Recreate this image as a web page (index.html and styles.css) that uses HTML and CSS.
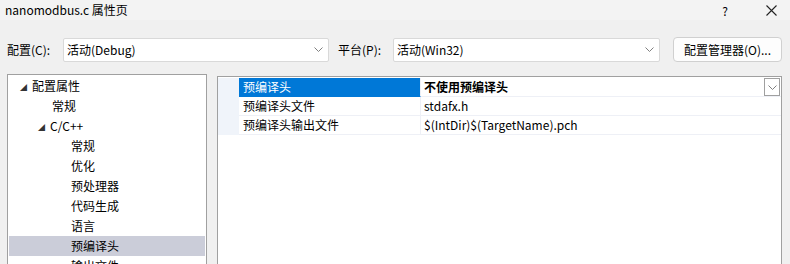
FILE: index.html
```html
<!DOCTYPE html>
<html>
<head>
<meta charset="utf-8">
<link rel="stylesheet" href="styles.css">
</head>
<body>

<!-- barra de titulo -->
<div class="titlebar">
  <span class="title">nanomodbus.c 属性页</span>
  <span class="caption-btn help">?</span>
  <span class="caption-btn close">
    <svg width="11" height="11" viewBox="0 0 11 11"><path d="M0.5 0.5 L10.5 10.5 M10.5 0.5 L0.5 10.5" stroke="#222" stroke-width="1.1" fill="none"/></svg>
  </span>
</div>

<!-- fila de configuracion -->
<div class="toolbar">
  <label class="lbl lbl-config">配置(C):</label>
  <div class="combo combo-config">
    <span>活动(Debug)</span>
    <svg class="chev" width="9" height="5" viewBox="0 0 9 5"><path d="M0.5 0.5 L4.5 4.5 L8.5 0.5" stroke="#808080" fill="none"/></svg>
  </div>
  <label class="lbl lbl-platform">平台(P):</label>
  <div class="combo combo-platform">
    <span>活动(Win32)</span>
    <svg class="chev" width="9" height="5" viewBox="0 0 9 5"><path d="M0.5 0.5 L4.5 4.5 L8.5 0.5" stroke="#808080" fill="none"/></svg>
  </div>
  <button class="btn-manager">配置管理器(O)...</button>
</div>

<div class="main">

  <!-- arbol -->
  <div class="tree">
    <div class="node lvl0"><span class="tri">◢</span>配置属性</div>
    <div class="node lvl1">常规</div>
    <div class="node lvl1b"><span class="tri">◢</span>C/C++</div>
    <div class="node lvl2">常规</div>
    <div class="node lvl2">优化</div>
    <div class="node lvl2">预处理器</div>
    <div class="node lvl2">代码生成</div>
    <div class="node lvl2">语言</div>
    <div class="node lvl2 selected">预编译头</div>
    <div class="node lvl2">输出文件</div>
  </div>

  <!-- propiedades -->
  <div class="props">
    <div class="grid">
      <div class="gutter"></div>
      <div class="name active">预编译头</div>
      <div class="value bold">
        <span>不使用预编译头</span>
        <span class="dropbtn">
          <svg width="9" height="5" viewBox="0 0 9 5"><path d="M0.5 0.5 L4.5 4.5 L8.5 0.5" stroke="#808080" fill="none"/></svg>
        </span>
      </div>

      <div class="gutter"></div>
      <div class="name">预编译头文件</div>
      <div class="value">stdafx.h</div>

      <div class="gutter"></div>
      <div class="name">预编译头输出文件</div>
      <div class="value">$(IntDir)$(TargetName).pch</div>
    </div>
  </div>

</div>

</body>
</html>
```

FILE: styles.css
```css
/* -------------------------------- general -------------------------------- */
html, body
{
  margin: 0;
  padding: 0;
}

body
{
  width: 790px;
  height: 264px;
  overflow: hidden;
  background-color: #f0f0f0;
  font-family: "Noto Sans CJK SC", "Open Sans", sans-serif;
  font-size: 12px;
  color: #000;
}

/* -------------------------------- titulo -------------------------------- */
.titlebar
{
  height: 20px;
  display: flex;
  align-items: center;
  background-color: #f3f3f3;
}

.title
{
  margin-left: 5px;
  flex: 1;
  line-height: 20px;
}

.caption-btn
{
  display: flex;
  align-items: center;
  justify-content: center;
  height: 20px;
}

.help
{
  width: 12px;
  margin-right: 34px;
  font-size: 12px;
}

.close
{
  width: 12px;
  margin-right: 13px;
}

/* -------------------------------- configuracion -------------------------------- */
.toolbar
{
  display: flex;
  align-items: center;
  padding-top: 17px;
  height: 25px;
}

.lbl
{
  line-height: 24px;
}

.lbl-config
{
  margin-left: 7px;
  width: 56px;
}

.lbl-platform
{
  margin-left: 9px;
  width: 55px;
}

.combo
{
  box-sizing: border-box;
  height: 24px;
  background-color: #fff;
  border: 1px solid #d9d9d9;
  border-radius: 2px;
  display: flex;
  align-items: center;
  padding-left: 3px;
  padding-right: 5px;
}

.combo span
{
  flex: 1;
}

.combo-config
{
  width: 266px;
}

.combo-platform
{
  width: 267px;
}

.chev
{
  display: block;
}

.btn-manager
{
  box-sizing: border-box;
  margin-left: 13px;
  width: 109px;
  height: 25px;
  background-color: #fdfdfd;
  border: 1px solid #d0d0d0;
  border-radius: 4px;
  font-family: inherit;
  font-size: 12px;
  color: #000;
  padding: 0;
}

/* -------------------------------- zona principal -------------------------------- */
.main
{
  display: flex;
  align-items: flex-start;
  margin-top: 12px;
}

.tree
{
  box-sizing: border-box;
  margin-left: 7px;
  width: 200px;
  height: 200px;
  background-color: #fff;
  border: 1px solid #a0a0a0;
  padding: 1px;
}

.node
{
  height: 20px;
  line-height: 20px;
  white-space: nowrap;
}

.tri
{
  display: inline-block;
  font-size: 7px;
  width: 12px;
  color: #333;
  vertical-align: 1px;
}

.lvl0
{
  padding-left: 11px;
}

.lvl1
{
  padding-left: 43px;
}

.lvl1b
{
  padding-left: 29px;
}

.lvl2
{
  padding-left: 62px;
}

.selected
{
  background-color: #cbcdd9;
}

/* -------------------------------- propiedades -------------------------------- */
.props
{
  box-sizing: border-box;
  margin-left: 10px;
  margin-top: 2px;
  width: 565px;
  height: 200px;
  background-color: #fff;
  border: 1px solid #a0a0a0;
  padding-top: 1px;
}

.grid
{
  display: grid;
  grid-template-columns: 21px 182px 1fr;
  grid-auto-rows: 19px;
}

.gutter
{
  background-color: #f0f4fa;
}

.name, .value
{
  line-height: 18px;
  border-bottom: 1px solid #eef0f6;
  white-space: nowrap;
}

.name
{
  padding-left: 4px;
  border-right: 1px solid #eef0f6;
}

.value
{
  padding-left: 3px;
  display: flex;
  align-items: center;
  padding-right: 1px;
}

.value span:first-child
{
  flex: 1;
}

.active
{
  background-color: #0078d7;
  color: #fff;
  border-bottom-color: #0078d7;
}

.bold
{
  font-weight: bold;
}

.dropbtn
{
  box-sizing: border-box;
  width: 16px;
  height: 18px;
  border: 1px solid #a0a0a0;
  display: flex;
  align-items: center;
  justify-content: center;
  background-color: #fff;
}
/* -------------------------------- fin -------------------------------- */
```
